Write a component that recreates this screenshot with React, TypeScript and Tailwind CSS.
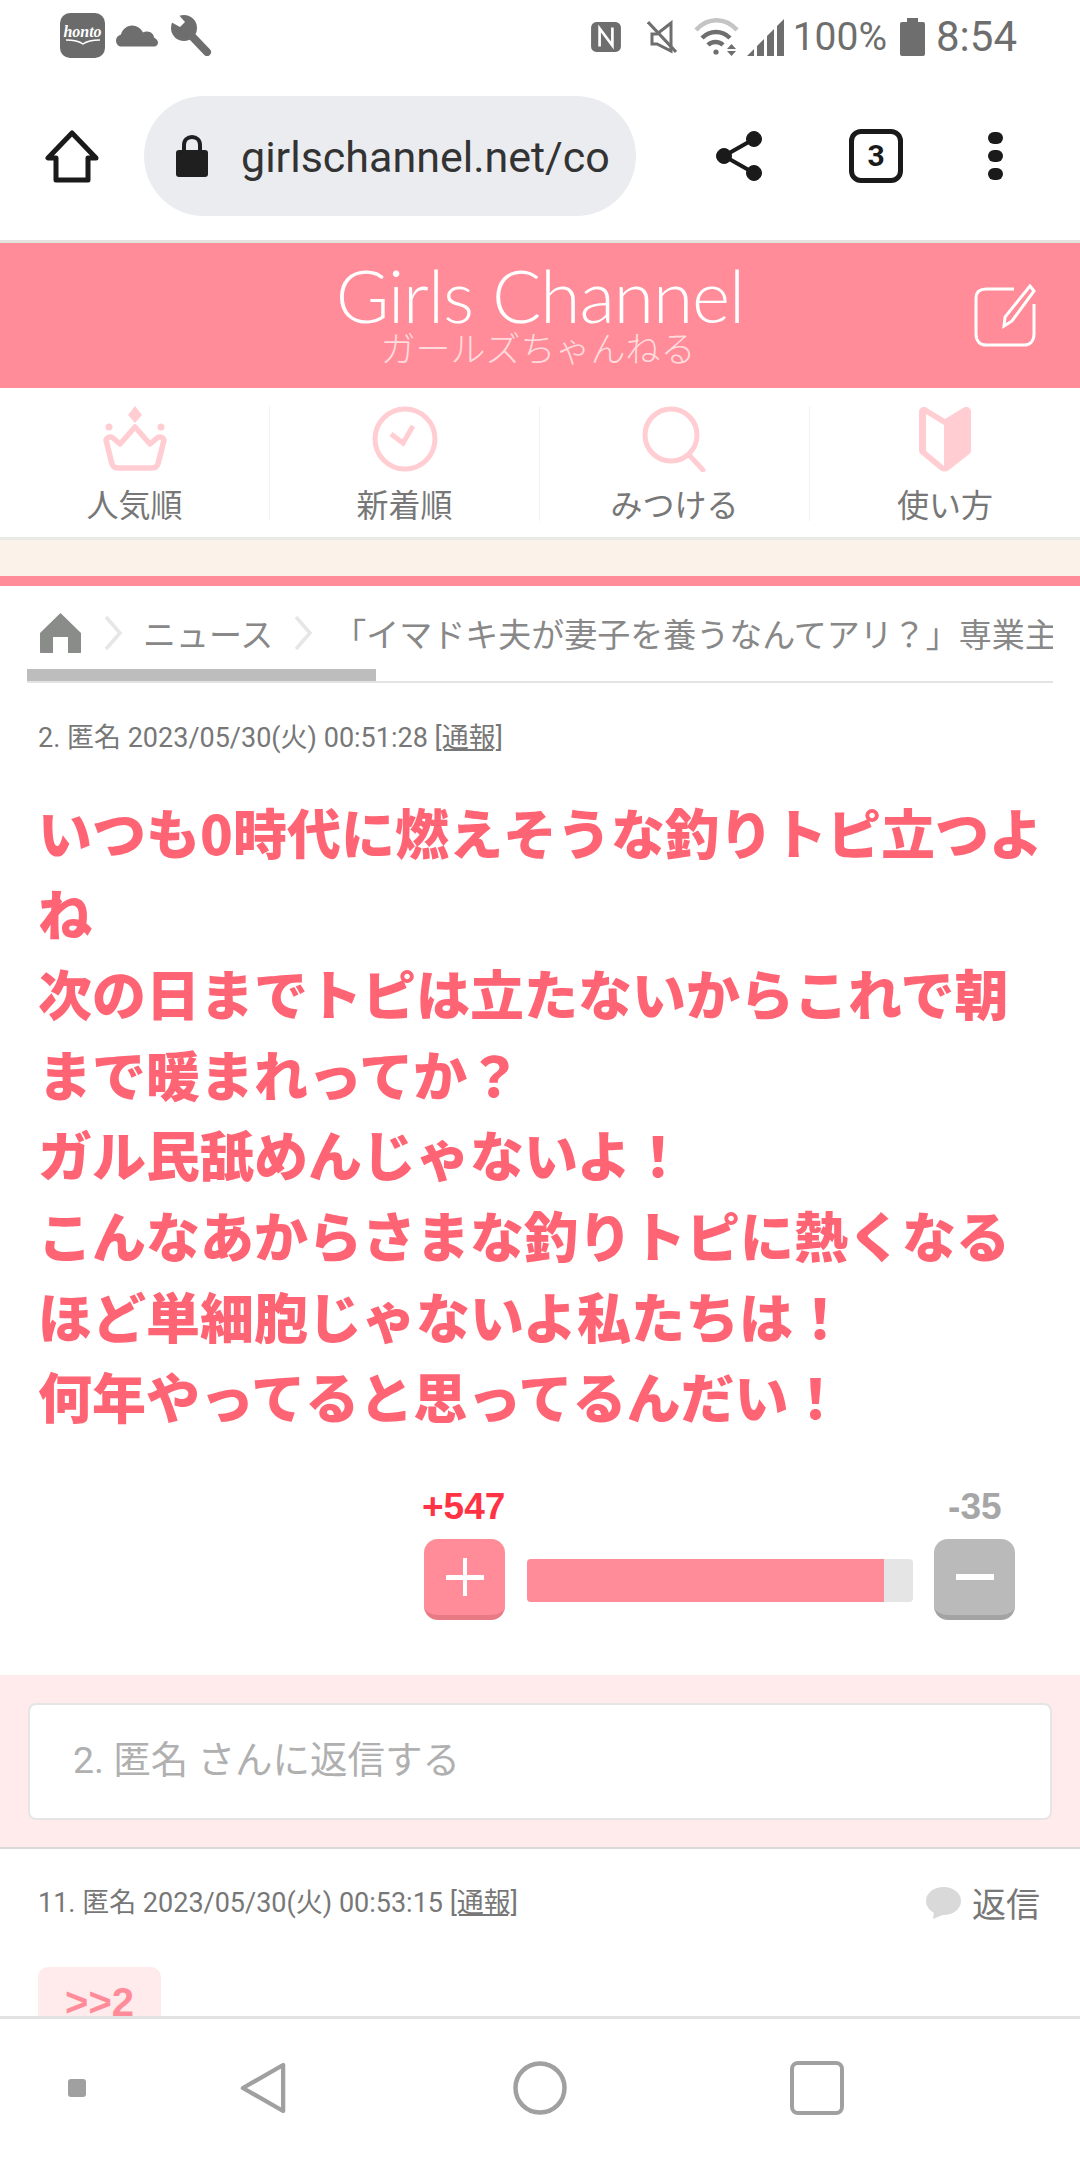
const bodyLines = [
  "いつも0時代に燃えそうな釣りトピ立つよ",
  "ね",
  "次の日までトピは立たないからこれで朝",
  "まで暖まれってか？",
  "ガル民舐めんじゃないよ！",
  "こんなあからさまな釣りトピに熱くなる",
  "ほど単細胞じゃないよ私たちは！",
  "何年やってると思ってるんだい！",
];

const jp = "font-['Noto_Sans_CJK_JP',sans-serif]";
const roboto = "font-['Roboto','Noto_Sans_CJK_JP',sans-serif]";

function StatusBar() {
  return (
    <div className="flex h-[70px] items-center justify-between pl-[60px] pr-[63px] text-[#6e6e6e]">
      <div className="flex items-center">
        <div className="flex h-[45px] w-[45px] flex-col items-center justify-center rounded-[10px] bg-[#6b6b6b] font-['Liberation_Serif',serif] text-[16px] font-bold italic leading-[14px] text-white">
          honto
          <svg width="36" height="6" viewBox="0 0 36 6" fill="none" stroke="#fff" strokeWidth="1.500">
            <path d="M1 1c7 0 13 1 17 4 4-3 10-4 17-4" />
          </svg>
        </div>
        <svg className="ml-[11px]" width="42" height="23" viewBox="0 0 42 22" fill="#6e6e6e">
          <path d="M4 22C1 21 0 18 0 16c0-3 2-5 5-6 1-5 6-9 11-9 5 0 9 3 11 7 1-1 3-1 4-1 4 0 7 3 7 6 2 1 4 3 4 5 0 2-1 3-3 4z" />
        </svg>
        <svg className="ml-[12px]" width="42" height="42" viewBox="0 0 42 42">
          <circle cx="14" cy="14" r="13" fill="#6e6e6e" />
          <path d="M15 15l22 23" stroke="#6e6e6e" strokeWidth="8" strokeLinecap="round" />
          <path d="M7 -1l8 9-5 5-11-6z" fill="#fff" />
        </svg>
      </div>
      <div className="mt-[4px] flex items-center">
        <svg width="32" height="32" viewBox="0 0 30 30">
          <rect x="1" y="1" width="28" height="28" rx="5" fill="#6e6e6e" />
          <path d="M9 24V7l12 16V6" stroke="#fff" strokeWidth="2.500" fill="none" />
        </svg>
        <svg className="ml-[25px]" width="30" height="34" viewBox="0 0 30 32" fill="none" stroke="#6e6e6e" strokeWidth="3">
          <path d="M5 13h5L24 2v28L10 23H5z" />
          <path d="M1 1l28 30" />
        </svg>
        <svg className="ml-[17px]" width="45" height="38" viewBox="0 0 45 38" fill="none" strokeWidth="4.500">
          <path d="M2 12c12-13 29-13 41 0" stroke="#c4c4c4" />
          <path d="M8 20c8-8 20-8 28 0" stroke="#6e6e6e" />
          <path d="M14 27c4-4 11-4 15 0" stroke="#6e6e6e" />
          <circle cx="22" cy="34" r="2.600" fill="#6e6e6e" stroke="none" />
          <path d="M33 31l4.500-5 4.500 5zM33 33l4.500 5 4.500-5z" fill="#6e6e6e" stroke="none" />
        </svg>
        <svg className="ml-[8px]" width="37" height="37" viewBox="0 0 37 37" fill="#6e6e6e">
          <path d="M0 37l7-7v7z" />
          <path d="M10 37V27l7-7v17z" />
          <path d="M20 37V17l7-7v27z" />
          <path d="M30 37V7l7-7v37z" />
        </svg>
        <span className="ml-[9px] font-['Roboto',sans-serif] text-[39px] leading-none">100%</span>
        <svg className="ml-[13px]" width="25" height="38" viewBox="0 0 25 38" fill="#6e6e6e">
          <rect x="7" y="0" width="11" height="5" />
          <rect x="0" y="4" width="25" height="34" rx="2" />
        </svg>
        <span className="ml-[11px] font-['Roboto',sans-serif] text-[42px] leading-none">8:54</span>
      </div>
    </div>
  );
}

function Toolbar() {
  return (
    <div className="flex h-[173px] items-center border-b-[3px] border-[#e2e3df] pl-[45px] pt-[1px]">
      <svg width="54" height="54" viewBox="0 0 54 54" fill="none" stroke="#1a1a1a" strokeWidth="5" strokeLinejoin="round">
        <path d="M27 4L3 29h8v22h32V29h8z" />
      </svg>
      <div className="ml-[45px] flex h-[120px] w-[492px] items-center rounded-[60px] bg-[#ebecf0] pl-[32px]">
        <svg width="32" height="42" viewBox="0 0 32 42" fill="#1f1f1f">
          <path d="M8 16V10c0-5 3.500-8 8-8s8 3 8 8v6" fill="none" stroke="#1f1f1f" strokeWidth="4" />
          <rect x="0" y="15" width="32" height="27" rx="3" />
        </svg>
        <span className="ml-[33px] mt-[3px] font-['Roboto',sans-serif] text-[43px] leading-none text-[#333]">girlschannel.net/co</span>
      </div>
      <svg className="ml-[80px]" width="46" height="50" viewBox="0 0 46 50" fill="#1a1a1a" stroke="#1a1a1a">
        <path d="M38 8L8 25l30 17" fill="none" strokeWidth="4" />
        <circle cx="38" cy="8" r="7.500" />
        <circle cx="8" cy="25" r="7.500" />
        <circle cx="38" cy="42" r="7.500" />
      </svg>
      <div className={`ml-[87px] flex h-[54px] w-[54px] items-center justify-center rounded-[12px] border-[5px] border-[#1a1a1a] ${roboto} text-[30px] font-bold text-[#1a1a1a]`}>
        3
      </div>
      <div className="ml-[85px] flex h-[48px] w-[17px] flex-col justify-between">
        <div className="h-[12px] w-[15px] rounded-full bg-[#1a1a1a]" />
        <div className="h-[12px] w-[15px] rounded-full bg-[#1a1a1a]" />
        <div className="h-[12px] w-[15px] rounded-full bg-[#1a1a1a]" />
      </div>
    </div>
  );
}

function SiteHeader() {
  return (
    <div className="relative flex h-[145px] flex-col items-center bg-[#ff8c98] text-white">
      <div className="mt-[22px] font-['Lato',sans-serif] text-[73px] font-light leading-[60px] tracking-[-1px]">Girls Channel</div>
      <div className={`${jp} -ml-[4px] mt-[2px] text-[35px] font-light leading-[40px] text-white/70`}>ガールズちゃんねる</div>
      <svg className="absolute left-[974px] top-[41px]" width="62" height="63" viewBox="0 0 62 63" fill="none" stroke="#fff" strokeWidth="3">
        <path d="M40 5H12C6 5 2 8 2 14v36c0 7 4 11 10 11h38c6 0 10-4 10-11V20" />
        <path d="M56 2l4 5-22 30-8 5 1-9z" />
      </svg>
    </div>
  );
}

const tabIcon = "#ffcdd2";

function NavTabs() {
  const tabs = [
    {
      label: "人気順",
      icon: (
        <svg width="66" height="66" viewBox="0 0 66 66" fill="none" stroke={tabIcon} strokeWidth="5.500" strokeLinejoin="round">
          <path d="M33 0l7 9-7 8-7-8z" fill={tabIcon} stroke="none" />
          <circle cx="7" cy="21" r="3.500" fill={tabIcon} stroke="none" />
          <circle cx="59" cy="21" r="3.500" fill={tabIcon} stroke="none" />
          <path d="M4 34c1-3 5-4 7-2l7 6 15-17 15 17 7-6c2-2 6-1 7 2l-6 24c-1 3-3 4-6 4H16c-3 0-5-1-6-4z" />
        </svg>
      ),
    },
    {
      label: "新着順",
      icon: (
        <svg width="66" height="66" viewBox="0 0 66 66" fill="none" stroke={tabIcon}>
          <circle cx="33" cy="33" r="30" strokeWidth="5" />
          <path d="M19 28l12 9 10-17" strokeWidth="5" />
        </svg>
      ),
    },
    {
      label: "みつける",
      icon: (
        <svg width="66" height="66" viewBox="0 0 66 66" fill="none" stroke={tabIcon} strokeWidth="5">
          <circle cx="29" cy="29" r="26" />
          <path d="M48 50l13 14" strokeLinecap="round" />
        </svg>
      ),
    },
    {
      label: "使い方",
      icon: (
        <svg width="52" height="65" viewBox="0 0 52 65" fill={tabIcon}>
          <path d="M5 0c1 0 2 0 3 1l18 11L44 1c1-1 2-1 3-1 3 0 5 2 5 5v38c0 2-1 4-3 5L30 63c-3 2-6 2-9 0L3 48c-2-1-3-3-3-5V5c0-3 2-5 5-5z" />
          <path d="M7 7l18 11v41L7 44z" fill="#fff" />
        </svg>
      ),
    },
  ];
  return (
    <div className="flex h-[152px] border-b-[3px] border-[#e9e9e5] bg-white">
      {tabs.map((tab, i) => (
        <div key={tab.label} className="flex w-[270px] items-start pt-[18px]">
          <div className="flex flex-1 flex-col items-center">
            <div className="flex h-[66px] items-center">{tab.icon}</div>
            <span className={`${jp} mt-[11px] text-[32px] leading-[40px] text-[#777]`}>{tab.label}</span>
          </div>
          {i < 3 && <div className="h-[115px] w-px bg-[#f2f2f2]" />}
        </div>
      ))}
    </div>
  );
}

function Breadcrumb() {
  const chevron = (
    <svg width="20" height="36" viewBox="0 0 20 36" fill="none" stroke="#e6e6e6" strokeWidth="3.500">
      <path d="M3 2l14 16L3 34" />
    </svg>
  );
  return (
    <div className="mx-[27px] mt-[27px] h-[70px] overflow-hidden border-b-[2px] border-[#e3e3e3]">
      <div className="flex items-center pl-[13px]">
        <svg className="shrink-0" width="41" height="40" viewBox="0 0 41 40" fill="#8a8c8a">
          <path d="M20.500 0L41 20v19c0 1-.5 1-1 1H28V24H13v16H1c-.5 0-1 0-1-1V20z" />
        </svg>
        <div className="ml-[22px] shrink-0">{chevron}</div>
        <span className={`${jp} ml-[20px] shrink-0 whitespace-nowrap text-[33px] leading-[40px] text-[#888]`}>ニュース</span>
        <div className="ml-[20px] shrink-0">{chevron}</div>
        <span className={`${jp} ml-[20px] shrink-0 whitespace-nowrap text-[33px] leading-[40px] text-[#888]`}>「イマドキ夫が妻子を養うなんてアリ？」専業主婦</span>
      </div>
      <div className="mt-[16px] h-[12px] w-[349px] bg-[#bdbdbd]" />
    </div>
  );
}

function Vote() {
  return (
    <div className="mt-[48px] flex pl-[424px] font-['Liberation_Sans',sans-serif]">
      <div className="flex flex-col">
        <span className="-ml-[2px] text-[37px] font-bold leading-[44px] text-[#ff3344]">+547</span>
        <div className="mt-[10px] flex h-[81px] w-[81px] items-center justify-center rounded-[14px] border-b-[5px] border-[#e87a86] bg-[#ff8c98]">
          <svg width="38" height="38" viewBox="0 0 38 38" fill="#fff">
            <rect x="17" y="0" width="4" height="38" />
            <rect x="0" y="17" width="38" height="5" />
          </svg>
        </div>
      </div>
      <div className="ml-[22px] mt-[74px] h-[43px] w-[386px] overflow-hidden rounded-[4px] bg-[#e5e5e5]">
        <div className="h-full w-[357px] bg-[#ff8c98]" />
      </div>
      <div className="ml-[21px] flex flex-col items-center">
        <span className="text-[37px] font-bold leading-[44px] text-[#a6a6a6]">-35</span>
        <div className="mt-[10px] flex h-[81px] w-[81px] items-center justify-center rounded-[14px] border-b-[5px] border-[#a3a3a3] bg-[#bababa]">
          <div className="h-[6px] w-[38px] bg-white" />
        </div>
      </div>
    </div>
  );
}

function ReplyBox() {
  return (
    <div className="mt-[55px] h-[174px] border-b-[2px] border-[#d9d9d9] bg-[#ffebec] px-[28px] pt-[28px]">
      <div className={`${roboto} flex h-[117px] items-center rounded-[8px] border-[2px] border-[#e5e5e5] bg-white pb-[3px] pl-[43px] text-[37.500px] text-[#b0b0b0]`}>
        2. 匿名 さんに返信する
      </div>
    </div>
  );
}

function NextComment() {
  return (
    <div className="h-[168px] overflow-hidden px-[38px]">
      <div className="mt-[34px] flex items-center justify-between">
        <span className={`${roboto} text-[27px] leading-[40px] text-[#777]`}>
          11. 匿名 2023/05/30(火) 00:53:15 <span className="underline">[通報]</span>
        </span>
        <span className="flex items-center">
          <svg width="35" height="32" viewBox="0 0 35 32" fill="#d9d9d9">
            <ellipse cx="17.500" cy="14" rx="17.500" ry="14" />
            <path d="M8 24l-1 8 12-5z" />
          </svg>
          <span className={`${jp} ml-[11px] mr-[2px] text-[34px] leading-[40px] text-[#777]`}>返信</span>
        </span>
      </div>
      <div className="mt-[44px] flex h-[60px] w-[123px] justify-center rounded-[10px] bg-[#ffebec] pt-[13px] font-['Liberation_Sans',sans-serif] text-[40px] font-bold leading-[44px] text-[#ff8c98]">
        &gt;&gt;2
      </div>
    </div>
  );
}

function NavBar() {
  return (
    <div className="flex h-[144px] shrink-0 items-center border-t-[3px] border-[#e3e3e3] bg-white pb-[3px] pl-[68px]">
      <div className="h-[18px] w-[18px] rounded-[3px] bg-[#a0a0a0]" />
      <svg className="ml-[154px]" width="46" height="54" viewBox="0 0 48 54" fill="none" stroke="#a0a0a0" strokeWidth="4.500" strokeLinejoin="round">
        <path d="M45 3v48L3 27z" />
      </svg>
      <svg className="ml-[227px]" width="54" height="54" viewBox="0 0 54 54" fill="none" stroke="#a0a0a0" strokeWidth="4.500">
        <circle cx="27" cy="27" r="24.500" />
      </svg>
      <div className="ml-[223px] h-[54px] w-[54px] rounded-[8px] border-[4.500px] border-[#a0a0a0]" />
    </div>
  );
}

export default function App() {
  return (
    <div className="flex h-[2160px] w-[1080px] flex-col overflow-hidden bg-white">
      <StatusBar />
      <Toolbar />
      <SiteHeader />
      <NavTabs />
      <div className="h-[36px] bg-[#fbf2e9]" />
      <div className="h-[10px] bg-[#ff8c98]" />
      <Breadcrumb />
      <div className="min-h-0 flex-1 overflow-hidden">
        <div className={`${roboto} ml-[38px] mt-[35px] text-[27px] leading-[40px] text-[#777]`}>
          2. 匿名 2023/05/30(火) 00:51:28 <span className="underline">[通報]</span>
        </div>
        <div className={`${jp} ml-[38px] mt-[34px] text-[54px] font-black leading-[80.600px] text-[#ff6474]`}>
          {bodyLines.map((line) => (
            <div key={line} className="whitespace-nowrap">{line}</div>
          ))}
        </div>
        <Vote />
        <ReplyBox />
        <NextComment />
      </div>
      <NavBar />
    </div>
  );
}
